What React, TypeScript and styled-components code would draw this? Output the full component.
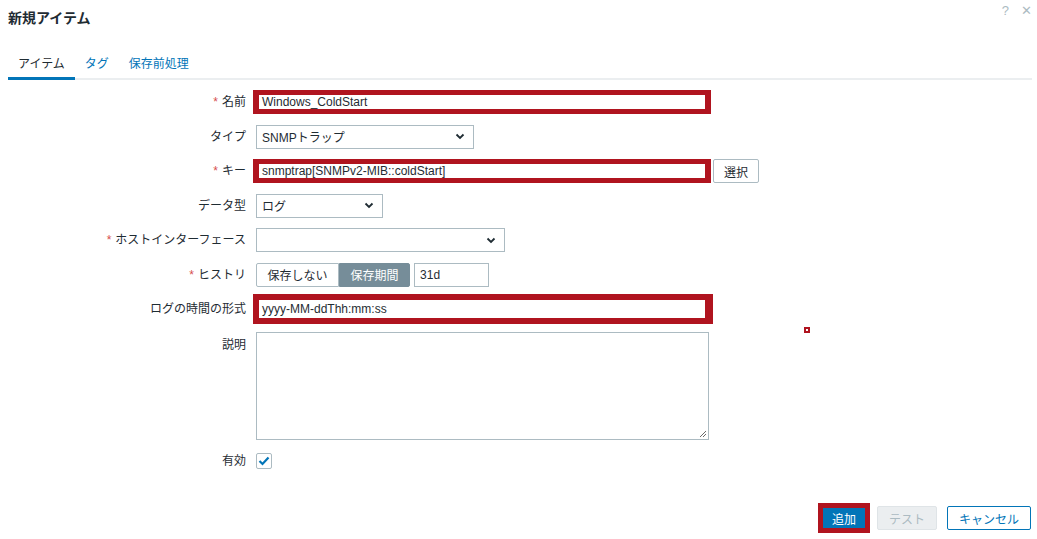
import * as React from 'react';
import styled, { createGlobalStyle, css } from 'styled-components';

const RED = '#b0141f';
const TEXT = '#1f2c33';
const BLUE = '#0275b8';
const BORDER = '#acbbc2';

const GlobalStyle = createGlobalStyle`
  html, body {
    margin: 0;
    padding: 0;
    background: #ffffff;
  }
  body {
    font-family: "Liberation Sans", Arial, "Noto Sans CJK JP", sans-serif;
    font-size: 12px;
    color: ${TEXT};
  }
`;

const Page = styled.div`
  position: relative;
  width: 1037px;
  height: 539px;
  overflow: hidden;
`;

const Header = styled.div`
  display: flex;
  justify-content: space-between;
  align-items: flex-start;
  height: 36px;
  padding: 0 5px 0 8px;
`;

const Title = styled.h4`
  margin: 0;
  line-height: 36px;
  font-size: 14px;
  font-weight: bold;
  color: ${TEXT};
`;

const HeaderIcons = styled.div`
  display: flex;
  gap: 12px;
  padding-top: 3px;
  color: ${BORDER};
  font-size: 13px;
`;

const TabBar = styled.div`
  display: flex;
  align-items: flex-end;
  margin: 14px 5px 0 8px;
  border-bottom: 2px solid #ebeef0;
`;

const Tab = styled.span<{ $active?: boolean }>`
  padding: 7px 10px 6px;
  line-height: 14px;
  margin-bottom: -2px;
  border-bottom: 3px solid ${(p) => (p.$active ? BLUE : 'transparent')};
  color: ${(p) => (p.$active ? TEXT : BLUE)};
`;

const Form = styled.div`
  display: grid;
  grid-template-columns: 246px 1fr;
  column-gap: 10px;
  row-gap: 10.5px;
  margin-top: 10px;
`;

const Label = styled.label<{ $top?: boolean }>`
  text-align: right;
  align-self: ${(p) => (p.$top ? 'start' : 'center')};
  padding-top: ${(p) => (p.$top ? '6px' : '0')};
  line-height: 14px;
`;

const Star = styled.span`
  color: #d64e4e;
  margin-right: 4px;
`;

const Field = styled.div<{ $gap?: number }>`
  display: flex;
  align-items: center;
  gap: ${(p) => p.$gap ?? 5}px;
  min-height: 24px;
`;

const thinMark = css`
  border-color: ${RED};
  border-width: 5px 3px;
  padding-left: 3px;
  box-shadow: -3px 0 0 ${RED}, 3px 0 0 ${RED};
`;

const bigMark = css`
  border-color: ${RED};
  border-width: 3px;
  padding-left: 3px;
  box-shadow: 0 0 0 3px ${RED}, 2px 0 0 3px ${RED};
`;

const TextBox = styled.div<{ $w: number; $mark?: 'thin' | 'big' }>`
  box-sizing: border-box;
  width: ${(p) => p.$w}px;
  height: 24px;
  border: 1px solid ${BORDER};
  background: #fff;
  padding: 0 5px;
  display: flex;
  align-items: center;
  white-space: nowrap;
  ${(p) => (p.$mark === 'thin' ? thinMark : p.$mark === 'big' ? bigMark : '')}
`;

const SelectBox = styled.div<{ $w: number }>`
  box-sizing: border-box;
  width: ${(p) => p.$w}px;
  height: 24px;
  border: 1px solid ${BORDER};
  background: #fff;
  padding: 0 8px 0 5px;
  display: flex;
  align-items: center;
  justify-content: space-between;
`;

const Button = styled.button`
  box-sizing: border-box;
  height: 24px;
  padding: 0 10px;
  border: 1px solid ${BORDER};
  border-radius: 2px;
  background: #fff;
  color: ${TEXT};
  font: inherit;
`;

const Segmented = styled.div`
  display: flex;
`;

const Segment = styled.span<{ $on?: boolean }>`
  box-sizing: border-box;
  height: 24px;
  display: flex;
  align-items: center;
  padding: 0 10.5px;
  border: 1px solid ${(p) => (p.$on ? '#768d99' : BORDER)};
  background: ${(p) => (p.$on ? '#768d99' : '#fff')};
  color: ${(p) => (p.$on ? '#fff' : TEXT)};
  border-radius: ${(p) => (p.$on ? '0 2px 2px 0' : '2px 0 0 2px')};
`;

const TextArea = styled.div`
  position: relative;
  box-sizing: border-box;
  width: 453px;
  height: 108px;
  border: 1px solid ${BORDER};
  background: #fff;
`;

const Grip = styled.svg`
  position: absolute;
  right: 1px;
  bottom: 1px;
`;

const CheckRow = styled.div`
  display: flex;
  align-items: center;
  margin-top: 3px;
`;

const CheckLabel = styled(Label)`
  margin-top: 3px;
`;

const Check = styled.span`
  box-sizing: border-box;
  width: 16px;
  height: 16px;
  border: 1px solid ${BORDER};
  border-radius: 2px;
  display: flex;
  align-items: center;
  justify-content: center;
`;

const Footer = styled.div`
  display: flex;
  justify-content: flex-end;
  gap: 10px;
  margin-top: 37px;
  padding-right: 6px;
`;

const FooterButton = styled.button<{ $kind: 'primary' | 'disabled' | 'outline' }>`
  box-sizing: border-box;
  height: 24px;
  padding: 0 11px;
  border-radius: 2px;
  font: inherit;
  ${(p) =>
    p.$kind === 'primary'
      ? css`
          background: ${BLUE};
          border: 2px solid ${RED};
          border-radius: 0;
          padding: 0 9px;
          color: #fff;
          box-shadow: 0 0 0 3px ${RED};
        `
      : p.$kind === 'disabled'
      ? css`
          background: #ebeef0;
          border: 1px solid #dfe4e7;
          color: #acbbc2;
        `
      : css`
          background: #fff;
          border: 1px solid ${BLUE};
          color: ${BLUE};
        `}
`;

const Dot = styled.span`
  position: absolute;
  left: 804px;
  top: 327px;
  width: 6px;
  height: 6px;
  box-sizing: border-box;
  border: 2px solid ${RED};
  background: #fff;
`;

const Chevron = () => (
  <svg width="10" height="7" viewBox="0 0 10 7">
    <path d="M1.5 1.5 L5 5 L8.5 1.5" fill="none" stroke={TEXT} strokeWidth="1.8" />
  </svg>
);

const Select = ({ w, value }: { w: number; value: string }) => (
  <SelectBox $w={w}>
    <span>{value}</span>
    <Chevron />
  </SelectBox>
);

const App = (): React.ReactElement => (
  <Page>
    <GlobalStyle />
    <Header>
      <Title>新規アイテム</Title>
      <HeaderIcons>
        <span>?</span>
        <span>✕</span>
      </HeaderIcons>
    </Header>
    <TabBar>
      <Tab $active>アイテム</Tab>
      <Tab>タグ</Tab>
      <Tab>保存前処理</Tab>
    </TabBar>
    <Form>
      <Label>
        <Star>*</Star>名前
      </Label>
      <Field>
        <TextBox $w={452} $mark="thin">Windows_ColdStart</TextBox>
      </Field>

      <Label>タイプ</Label>
      <Field>
        <Select w={218} value="SNMPトラップ" />
      </Field>

      <Label>
        <Star>*</Star>キー
      </Label>
      <Field>
        <TextBox $w={452} $mark="thin">snmptrap[SNMPv2-MIB::coldStart]</TextBox>
        <Button>選択</Button>
      </Field>

      <Label>データ型</Label>
      <Field>
        <Select w={127} value="ログ" />
      </Field>

      <Label>
        <Star>*</Star>ホストインターフェース
      </Label>
      <Field>
        <Select w={249} value="" />
      </Field>

      <Label>
        <Star>*</Star>ヒストリ
      </Label>
      <Field $gap={4}>
        <Segmented>
          <Segment>保存しない</Segment>
          <Segment $on>保存期間</Segment>
        </Segmented>
        <TextBox $w={75}>31d</TextBox>
      </Field>

      <Label>ログの時間の形式</Label>
      <Field>
        <TextBox $w={452} $mark="big">yyyy-MM-ddThh:mm:ss</TextBox>
      </Field>

      <Label $top>説明</Label>
      <Field>
        <TextArea>
          <Grip width="9" height="9" viewBox="0 0 9 9">
            <path d="M8 2 L2 8 M8 5 L5 8" stroke="#6b6b6b" strokeWidth="1" />
          </Grip>
        </TextArea>
      </Field>

      <CheckLabel>有効</CheckLabel>
      <CheckRow>
        <Check>
          <svg width="12" height="10" viewBox="0 0 12 10">
            <path d="M1.5 5 L4.5 8 L10.5 1.5" fill="none" stroke={BLUE} strokeWidth="2.2" />
          </svg>
        </Check>
      </CheckRow>
    </Form>
    <Footer>
      <FooterButton $kind="primary">追加</FooterButton>
      <FooterButton $kind="disabled">テスト</FooterButton>
      <FooterButton $kind="outline">キャンセル</FooterButton>
    </Footer>
    <Dot />
  </Page>
);

export default App;
